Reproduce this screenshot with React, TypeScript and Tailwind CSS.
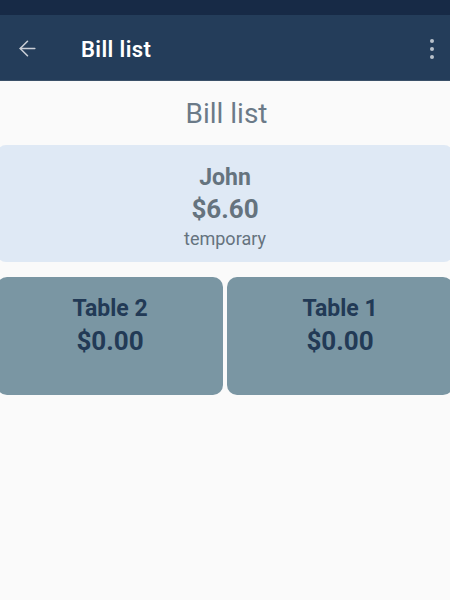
import { ArrowLeft } from 'lucide-react';

interface Bill {
  id: string;
  name: string;
  total: string;
}

const TABLES: Bill[] = [
  { id: 't2', name: 'Table 2', total: '$0.00' },
  { id: 't1', name: 'Table 1', total: '$0.00' },
];

export default function App() {
  return (
    <div className="flex flex-col h-[600px] w-[450px] overflow-hidden bg-[#fafafa] font-['Roboto',_'Noto_Sans',_sans-serif]">
      {/* Status bar */}
      <div className="h-[15px] bg-[#172a46] shrink-0" />

      {/* App bar */}
      <div className="h-[66px] bg-[#243d5a] flex items-center shrink-0 border-b border-[#3a5068]">
        <div className="w-[81px] flex items-center pl-[15px] pt-[2px]">
          <ArrowLeft className="w-[25px] h-[25px] text-[#c9ced6]" strokeWidth={1.5} />
        </div>
        <h1 className="flex-1 text-white text-[22px] font-semibold tracking-[0.4px] leading-none pt-[4px]">
          Bill list
        </h1>
        <div className="w-[36px] flex flex-col items-center gap-[4px] pt-[2px]">
          <span className="w-[4px] h-[4px] rounded-full bg-[#b9c1ca]" />
          <span className="w-[4px] h-[4px] rounded-full bg-[#b9c1ca]" />
          <span className="w-[4px] h-[4px] rounded-full bg-[#b9c1ca]" />
        </div>
      </div>

      {/* Content */}
      <div className="flex flex-col">
        <h2 className="text-center text-[28px] text-[#6b7a88] leading-none mt-[19px] mb-[17px] pl-[3px]">
          Bill list
        </h2>

        <div className="-mx-[3px] flex flex-col gap-[15px]">
          <div className="h-[117px] rounded-[9px] bg-[#dfe9f5] flex flex-col items-center pt-[21px]">
            <span className="text-[23px] font-bold text-[#65737e] leading-none">John</span>
            <span className="text-[26px] font-bold text-[#65737e] leading-none mt-[7px]">$6.60</span>
            <span className="text-[18px] text-[#65737e] leading-none mt-[8px]">temporary</span>
          </div>

          <div className="flex gap-[4px]">
            {TABLES.map((t) => (
              <div
                key={t.id}
                className="flex-1 h-[118px] rounded-[10px] bg-[#7a96a3] flex flex-col items-center pt-[20px]"
              >
                <span className="text-[23px] font-bold text-[#223a56] leading-none">{t.name}</span>
                <span className="text-[26px] font-bold text-[#223a56] leading-none mt-[8px]">{t.total}</span>
              </div>
            ))}
          </div>
        </div>
      </div>
    </div>
  );
}
